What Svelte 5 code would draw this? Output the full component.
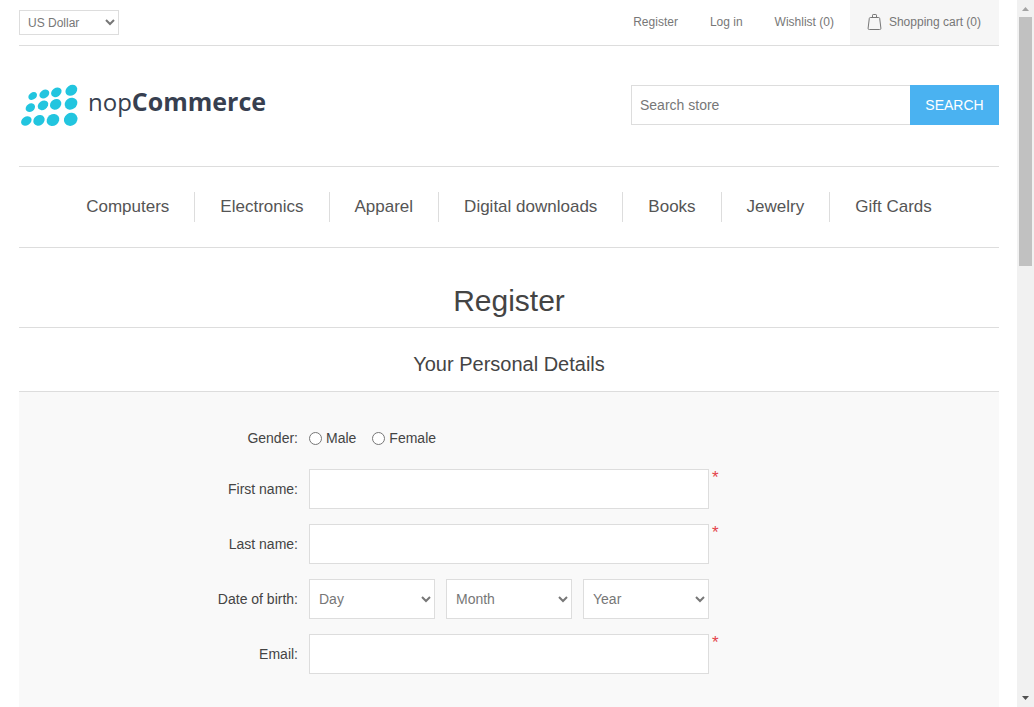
<script>
  const categories = ['Computers', 'Electronics', 'Apparel', 'Digital downloads', 'Books', 'Jewelry', 'Gift Cards'];
  const dateParts = ['Day', 'Month', 'Year'];
  const dots = [
    [53, 48, 14, 10.5], [88, 42, 16, 12], [124, 37, 17, 13], [169, 31, 19, 15],
    [46, 83, 15, 12], [84, 76, 17, 13], [122, 73, 18, 15], [168, 71, 20, 17],
    [34, 123, 17, 13], [72, 121, 18, 15], [114, 120, 20, 17], [167, 118, 21, 19]
  ];
</script>

<div class="window">
  <div class="page">
    <header>
      <div class="topbar">
        <select class="currency" aria-label="Currency"><option>US Dollar</option></select>
        <nav class="account" aria-label="Account">
          <a href="#register">Register</a>
          <a href="#login">Log in</a>
          <a href="#wishlist">Wishlist (0)</a>
          <a class="cart" href="#cart">
            <svg width="15" height="18" viewBox="0 0 15 18" fill="none" stroke="#777" aria-hidden="true">
              <path d="M3.3 4.5H11.7Q12.5 4.5 12.7 5.4L13.9 15.3Q14.1 16.5 12.6 16.5H2.4Q.9 16.5 1.1 15.3L2.3 5.4Q2.5 4.5 3.3 4.5Z" />
              <path d="M5.5 4.3V2.2Q5.5 1.5 6.2 1.5H8.8Q9.500 1.5 9.5 2.2V4.3" />
            </svg>
            Shopping cart (0)
          </a>
        </nav>
      </div>
      <div class="brandbar">
        <a class="logo" href="#home">
          <svg width="64" height="48" viewBox="12 6 192 144" aria-hidden="true">
            {#each dots as [x, y, rx, ry]}
              <ellipse cx={x} cy={y} {rx} {ry} transform={`rotate(-35 ${x} ${y})`} fill="#22c5df" />
            {/each}
          </svg>
          <span class="name"><span class="thin">nop</span><b>Commerce</b></span>
        </a>
        <form class="search">
          <input type="text" placeholder="Search store" aria-label="Search store" />
          <button type="button">SEARCH</button>
        </form>
      </div>
      <nav class="categories" aria-label="Categories">
        {#each categories as category}
          <a href="#category">{category}</a>
        {/each}
      </nav>
    </header>

    <main>
      <h1>Register</h1>
      <h2>Your Personal Details</h2>
      <form class="details">
        <div class="row gender" role="radiogroup" aria-labelledby="gender">
          <span class="label" id="gender">Gender:</span>
          <div class="choices">
            <label><input type="radio" name="gender" />Male</label>
            <label><input type="radio" name="gender" />Female</label>
          </div>
        </div>
        <div class="row">
          <label class="label" for="first">First name:</label>
          <input id="first" type="text" />
          <span class="required">*</span>
        </div>
        <div class="row">
          <label class="label" for="last">Last name:</label>
          <input id="last" type="text" />
          <span class="required">*</span>
        </div>
        <div class="row">
          <label class="label" for="Day">Date of birth:</label>
          <div class="dates">
            {#each dateParts as part}
              <select id={part} aria-label={part}><option>{part}</option></select>
            {/each}
          </div>
        </div>
        <div class="row">
          <label class="label" for="email">Email:</label>
          <input id="email" type="email" />
          <span class="required">*</span>
        </div>
      </form>
    </main>
  </div>
  <div class="scrollbar" aria-hidden="true">
    <svg width="17" height="17" viewBox="0 0 17 17"><path d="M5 11h7L8.500 7z" fill="#a3a3a3" /></svg>
    <div class="track"><div class="thumb"></div></div>
    <svg width="17" height="17" viewBox="0 0 17 17"><path d="M5 6h7L8.500 10z" fill="#505050" /></svg>
  </div>
</div>

<style>
  .window {
    display: flex;
    height: 100vh;
    overflow: hidden;
    background: #fff;
    color: #444;
    font: 14px "Liberation Sans", Arial, sans-serif;
  }
  .window * { box-sizing: border-box; }
  .page {
    flex: 1;
    display: flex;
    flex-direction: column;
    padding: 0 18px 0 19px;
    overflow-y: auto;
    scrollbar-width: none;
  }
  a { color: #777; text-decoration: none; }
  input, select, button { font: inherit; color: #777; border-radius: 0; margin: 0; }
  input::placeholder { color: #777; }
  input[type="text"], input[type="email"], select {
    border: 1px solid #ddd;
    background: #fff;
    outline: none;
  }
  .topbar {
    display: flex;
    justify-content: space-between;
    align-items: center;
    border-bottom: 1px solid #ddd;
    font-size: 12px;
  }
  .currency { width: 100px; height: 25px; padding: 0 4px; }
  .account { display: flex; line-height: 45px; }
  .account a { padding: 0 16px; }
  .account .cart {
    display: flex;
    align-items: center;
    gap: 7px;
    padding: 0 18px 0 17px;
    background: #f6f6f6;
  }
  .cart svg { margin-bottom: 2px; }
  .brandbar {
    display: flex;
    justify-content: space-between;
    align-items: center;
    padding: 39px 0 41px;
  }
  .logo { display: flex; align-items: flex-end; gap: 5px; height: 40px; }
  .logo svg { margin-bottom: -5px; }
  .name {
    padding-bottom: 6px;
    color: #373f50;
    font: 25px/34px "Open Sans", "Noto Sans", sans-serif;
  }
  .thin { font-size: 24px; }
  .search { display: flex; }
  .search input { width: 279px; height: 40px; padding: 0 8px; border-right: 0; }
  .search button { width: 89px; height: 40px; padding: 0; border: 0; background: #4ab2f1; color: #fff; }
  .categories {
    display: flex;
    justify-content: center;
    padding: 25px 0;
    border: solid #ddd;
    border-width: 1px 0;
  }
  .categories a {
    padding: 0 25px;
    color: #555;
    font-size: 17px;
    line-height: 30px;
  }
  .categories a + a { border-left: 1px solid #ddd; }
  main { flex: 1; display: flex; flex-direction: column; }
  h1, h2 { margin: 0; font-weight: normal; text-align: center; }
  h1 {
    padding-top: 35px;
    border-bottom: 1px solid #ddd;
    font-size: 30px;
    line-height: 36px;
    padding-bottom: 8px;
  }
  h2 { padding: 24px 0 15px; font-size: 20px; line-height: 24px; }
  .details {
    flex: 1;
    padding: 32px 0;
    border-top: 1px solid #ddd;
    background: #f9f9f9;
  }
  .row {
    display: grid;
    grid-template-columns: 1fr 400px 1fr;
    align-items: center;
    min-height: 40px;
    margin-bottom: 15px;
  }
  .row.gender { min-height: 28px; margin-bottom: 17px; }
  .label { padding-right: 11px; text-align: right; }
  .row > input { height: 40px; padding: 0 8px; }
  .choices { display: flex; gap: 16px; }
  .choices label { display: flex; align-items: center; gap: 4px; }
  .choices input { width: 13px; height: 13px; }
  .dates { display: grid; grid-template-columns: repeat(3, 1fr); gap: 11px; }
  .dates select { height: 40px; padding: 0 5px; }
  .required {
    align-self: start;
    padding-left: 3px;
    color: #e4434b;
    font-size: 17px;
    line-height: 18px;
  }
  .scrollbar { width: 17px; display: flex; flex-direction: column; background: #f1f1f1; }
  .track { flex: 1; padding: 0 2px; }
  .thumb { height: 37%; background: #c1c1c1; }
</style>
